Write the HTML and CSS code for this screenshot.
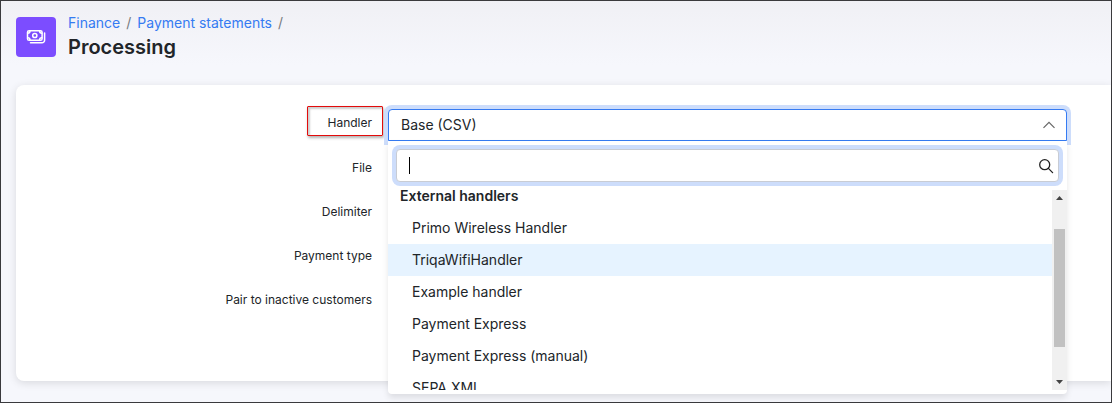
FILE: index.html
```html
<!DOCTYPE html>
<html lang="en">
<head>
<meta charset="utf-8">
<title>Processing</title>
<link rel="stylesheet" href="styles.css">
</head>
<body>
<div class="page">
  <header class="header">
    <div class="header-icon">
      <svg width="20" height="16" viewBox="0 0 20 16" fill="none" stroke="#fff" stroke-width="1.5" stroke-linecap="round" stroke-linejoin="round">
        <rect x="1.500" y="1.700" width="14.600" height="9.600" rx="1.600"/>
        <circle cx="8.800" cy="6.500" r="2.100"/>
        <path d="M1.800 4.200Q4 4.200 4 2M13.600 2q0 2.200 2.200 2.200M1.800 8.800q2.200 0 2.200 2.200M13.600 11q0-2.200 2.200-2.200"/>
        <path d="M18.600 4v7.200a2.600 2.600 0 0 1-2.600 2.600H4.500"/>
      </svg>
    </div>
    <div>
      <nav class="breadcrumbs" aria-label="Breadcrumb">
        <a href="#">Finance</a><span>/</span><a href="#">Payment statements</a><span>/</span>
      </nav>
      <h1 class="title">Processing</h1>
    </div>
  </header>
  <main class="card">
    <form class="form">
      <div class="row">
        <label class="label label-marked" for="handler">Handler</label>
        <div class="control">
          <select class="select" id="handler"><option>Base (CSV)</option></select>
          <svg class="chevron" width="12" height="8" viewBox="0 0 12 8" fill="none" stroke="#666" stroke-width="1.2"><path d="M.5 6.800 6 1.300l5.500 5.500"/></svg>
          <div class="menu">
            <div class="search">
              <input class="search-input" type="text" aria-label="Search handlers">
              <span class="caret"></span>
              <svg class="search-icon" width="16" height="16" viewBox="0 0 16 16" fill="none" stroke="#222" stroke-width="1.3" stroke-linecap="round"><circle cx="6.700" cy="6.700" r="5"/><path d="m10.400 10.400 4.200 4.200"/></svg>
            </div>
            <div class="results">
              <ul class="options">
                <li class="group">External handlers</li>
                <li class="option">Primo Wireless Handler</li>
                <li class="option option-active">TriqaWifiHandler</li>
                <li class="option">Example handler</li>
                <li class="option">Payment Express</li>
                <li class="option">Payment Express (manual)</li>
                <li class="option">SEPA XML</li>
              </ul>
              <div class="scrollbar">
                <svg width="7" height="4" viewBox="0 0 7 4" fill="#444"><path d="M0 4 3.500 0 7 4z"/></svg>
                <div class="track"><div class="thumb"></div></div>
                <svg width="7" height="4" viewBox="0 0 7 4" fill="#444"><path d="M0 0 3.500 4 7 0z"/></svg>
              </div>
            </div>
          </div>
        </div>
      </div>
      <div class="row"><label class="label" for="file">File</label><input class="field" id="file" type="text"></div>
      <div class="row"><label class="label" for="delimiter">Delimiter</label><input class="field" id="delimiter" type="text"></div>
      <div class="row"><label class="label" for="type">Payment type</label><input class="field" id="type" type="text"></div>
      <div class="row"><label class="label" for="pair">Pair to inactive customers</label><input class="check" id="pair" type="checkbox"></div>
    </form>
  </main>
</div>
</body>
</html>
```
FILE: styles.css
```css
* { box-sizing: border-box; }

body {
  margin: 0;
  font-family: Inter, "Liberation Sans", sans-serif;
  font-size: 14px;
  color: #212529;
}

.page {
  min-height: 100vh;
  padding: 12px 0 21px 15px;
  border: 1px solid #3a3a3d;
  background: linear-gradient(#f0f0f5, #f6f7fc 64px);
}

.header {
  display: flex;
  align-items: center;
  gap: 12px;
}

.header-icon {
  display: flex;
  align-items: center;
  justify-content: center;
  width: 40px;
  height: 40px;
  border-radius: 4px;
  background: #7c4dff;
}

.breadcrumbs {
  display: flex;
  gap: 6px;
  line-height: 20px;
  color: #777b80;
}

.breadcrumbs a {
  color: #357bf2;
  text-decoration: none;
}

.title {
  margin: 0;
  font-size: 20px;
  line-height: 28px;
  font-weight: 600;
}

.card {
  margin-top: 24px;
  padding: 24px 0 64px;
  border-radius: 8px 0 0 8px;
  background: #fff;
  box-shadow: 0 2px 8px rgba(0, 0, 0, 0.12);
}

.form {
  display: grid;
  gap: 12px;
}

.row {
  display: grid;
  grid-template-columns: minmax(0, 356fr) minmax(0, 679fr) minmax(0, 28fr);
  column-gap: 16px;
  align-items: center;
}

.label {
  justify-self: end;
  padding-bottom: 2px;
  font-size: 12px;
  line-height: 16px;
}

.label-marked {
  margin: -8px -11px 0 0;
  padding: 8px 10px 4px 19px;
  border: 1px solid #e30b0b;
  border-radius: 1px;
  box-shadow: 1px 2px 3px rgba(0, 0, 0, 0.3), inset 2px 2px 2px rgba(0, 0, 0, 0.2);
}

.control {
  position: relative;
  height: 32px;
}

.select {
  display: block;
  width: 100%;
  height: 32px;
  padding: 0 12px 2px;
  border: 1px solid #357bf2;
  border-radius: 4px 4px 0 0;
  appearance: none;
  background: #fff;
  box-shadow: 0 0 0 4px #cdddfb;
  font: inherit;
  color: inherit;
}

.chevron {
  position: absolute;
  top: 12px;
  right: 12px;
}

.menu {
  position: absolute;
  top: 100%;
  left: 0;
  right: 0;
  z-index: 1;
  padding-bottom: 4px;
  border-radius: 0 0 4px 4px;
  background: #fff;
  box-shadow: 0 4px 6px rgba(0, 0, 0, 0.1);
}

.search {
  position: relative;
  padding: 8px;
}

.search-input {
  display: block;
  width: 100%;
  height: 33px;
  padding: 0 32px 0 12px;
  border: 1px solid #c8ccd4;
  border-radius: 4px;
  box-shadow: 0 0 0 4px #cdddfb;
  font: inherit;
}

.caret {
  position: absolute;
  top: 16px;
  left: 21px;
  width: 1px;
  height: 17px;
  background: #000;
}

.search-icon {
  position: absolute;
  top: 17px;
  right: 13px;
}

.results {
  display: flex;
  height: 200px;
  overflow: hidden;
}

.options {
  flex: 1;
  margin: -10px 0 0;
  padding: 0;
  list-style: none;
  line-height: 32px;
}

.group {
  padding-left: 12px;
  font-weight: 600;
}

.option { padding-left: 24px; }

.option-active { background: #e6f3ff; }

.scrollbar {
  display: flex;
  flex-direction: column;
  align-items: center;
  gap: 6px;
  width: 15px;
  padding: 6px 0;
  background: #f0f0f0;
}

.track {
  flex: 1;
  padding-top: 23px;
}

.thumb {
  width: 11px;
  height: 118px;
  background: #c1c1c1;
}

.field {
  height: 32px;
  border: 1px solid #c8ccd4;
  border-radius: 4px;
}

.check {
  justify-self: start;
  height: 32px;
  margin: 0;
}
```
